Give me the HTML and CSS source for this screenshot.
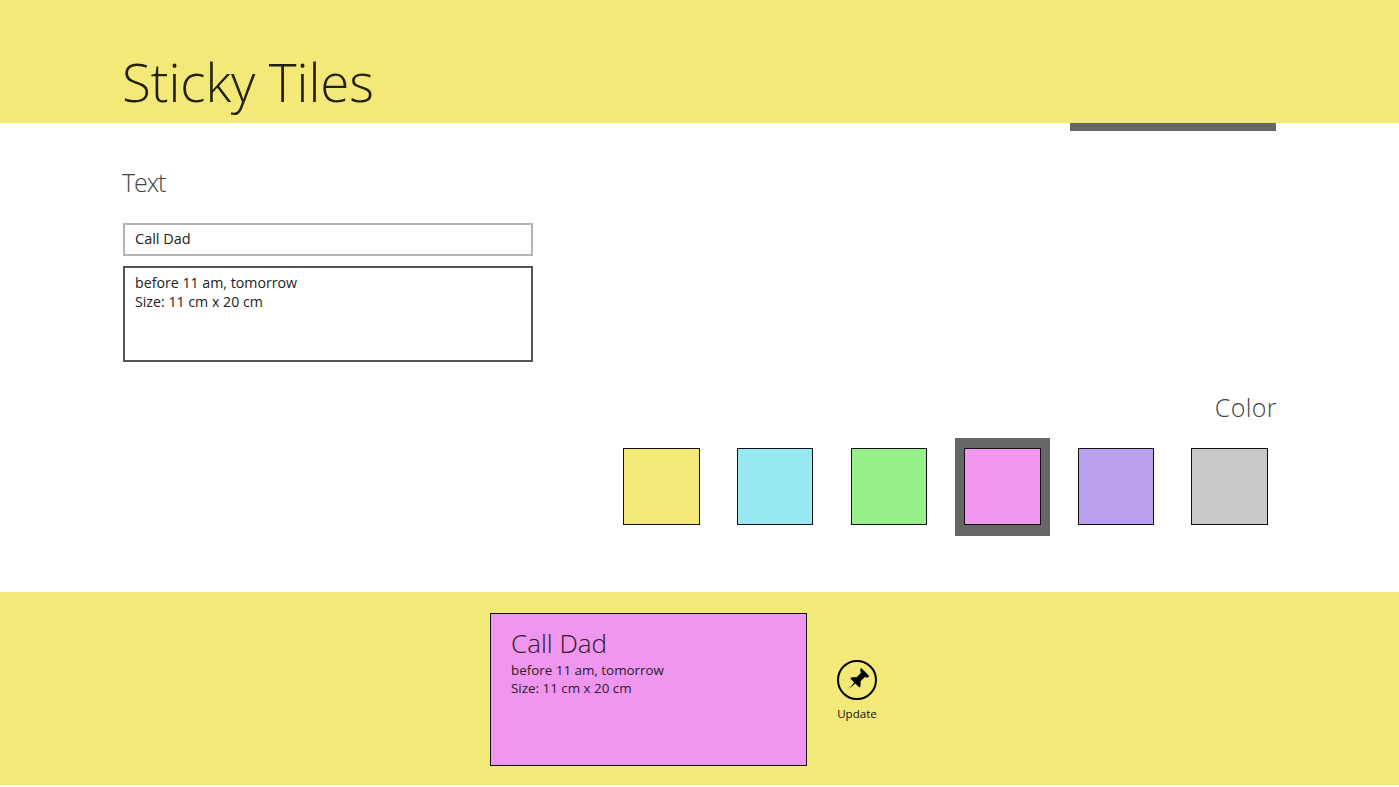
FILE: index.html
```html
<!DOCTYPE html>
<html lang="en">
<head>
    <meta charset="UTF-8">
    <meta name="viewport" content="width=device-width, initial-scale=1.0">
    <title>Sticky Tiles</title>
    <link rel="stylesheet" href="styles.css">
</head>
<body>
    <header class="app-header">
        <h1>Sticky Tiles</h1>
    </header>

    <main class="editor">
        <div class="tab-row">
            <div class="tab-marker"></div>
        </div>

        <section class="text-section">
            <h2>Text</h2>
            <input class="title-input" type="text" value="Call Dad">
            <textarea class="body-input">before 11 am, tomorrow
Size: 11 cm x 20 cm</textarea>
        </section>

        <section class="color-section">
            <h2>Color</h2>
            <div class="swatches">
                <div class="swatch-slot"><div class="swatch yellow"></div></div>
                <div class="swatch-slot"><div class="swatch cyan"></div></div>
                <div class="swatch-slot"><div class="swatch green"></div></div>
                <div class="swatch-slot selected"><div class="swatch pink"></div></div>
                <div class="swatch-slot"><div class="swatch purple"></div></div>
                <div class="swatch-slot"><div class="swatch gray"></div></div>
            </div>
        </section>
    </main>

    <footer class="preview-bar">
        <div class="tile">
            <div class="tile-title">Call Dad</div>
            <p>before 11 am, tomorrow</p>
            <p>Size: 11 cm x 20 cm</p>
        </div>
        <button class="update-button">
            <svg width="40" height="40" viewBox="0 0 40 40">
                <circle cx="20" cy="20" r="19" fill="none" stroke="#000" stroke-width="2"/>
                <g transform="rotate(45 20 20)">
                    <path d="M14.2 8.5h11.6v2.4l-2.4 1.4v6l3.6 3.6v1.8h-5.6l-.8 8.5-.8-8.5h-5.6v-1.8l3.6-3.6v-6l-2.4-1.4z" fill="#000"/>
                </g>
            </svg>
            <span>Update</span>
        </button>
    </footer>
</body>
</html>
```

FILE: styles.css
```css
body {
    font-family: "Open Sans", Arial, sans-serif;
    margin: 0;
    height: 787px;
    overflow: hidden;
    background-color: #fff;
    color: #222;
}

.app-header {
    height: 123px;
    background-color: #f3e978;
    padding-left: 122px;
}

.app-header h1 {
    margin: 0;
    padding-top: 47px;
    font-size: 53px;
    line-height: 70px;
    font-weight: 300;
    letter-spacing: -0.1px;
    color: #23200d;
}

.editor {
    height: 469px;
    padding: 0 122px 0 123px;
}

.tab-row {
    display: flex;
    justify-content: flex-end;
}

.tab-marker {
    width: 206px;
    height: 8px;
    margin-right: 1px;
    background-color: #666;
}

.text-section {
    width: 410px;
    padding-top: 35px;
}

h2 {
    margin: 0;
    font-size: 25px;
    line-height: 32px;
    font-weight: 300;
    color: #444;
}

.text-section h2 {
    margin-left: -1px;
    letter-spacing: -1.1px;
}

.title-input,
.body-input {
    display: block;
    box-sizing: border-box;
    width: 100%;
    padding: 0 10px;
    border-radius: 0;
    outline: none;
    background: #fff;
    font-family: "Open Sans", Arial, sans-serif;
    color: #222;
}

.title-input {
    height: 33px;
    margin-top: 25px;
    padding-bottom: 2px;
    border: 2px solid #b4b4b4;
    font-size: 14.5px;
}

.body-input {
    height: 96px;
    margin-top: 10px;
    padding-top: 5px;
    border: 2px solid #555;
    font-size: 14.2px;
    line-height: 19px;
    resize: none;
}

.color-section {
    margin-top: 29px;
}

.color-section h2 {
    text-align: right;
    letter-spacing: 0.4px;
}

.swatches {
    display: flex;
    justify-content: flex-end;
    align-items: center;
    gap: 19.1px;
    margin-top: 15px;
}

.swatch-slot {
    box-sizing: border-box;
    width: 94.5px;
    height: 98px;
    padding: 10px 8.8px;
}

.swatch-slot.selected {
    background-color: #666;
}

.swatch {
    box-sizing: border-box;
    width: 76.5px;
    height: 77px;
    border: 1px solid #111;
}

.yellow { background-color: #f3e978; }
.cyan { background-color: #96e9f1; }
.green { background-color: #96f08a; }
.pink { background-color: #f096ee; }
.purple { background-color: #b9a1ee; }
.gray { background-color: #c8c8c8; }

.preview-bar {
    display: flex;
    align-items: flex-start;
    height: 193px;
    padding-left: 490px;
    background-color: #f3e978;
}

.tile {
    box-sizing: border-box;
    width: 317px;
    height: 153px;
    margin-top: 21px;
    padding: 12px 20px;
    border: 1px solid #111;
    background-color: #f096ee;
    color: #2a1a2a;
}

.tile-title {
    font-size: 26px;
    line-height: 35px;
    font-weight: 300;
}

.tile p {
    margin: 0;
    font-size: 13.4px;
    line-height: 18px;
}

.update-button {
    display: flex;
    flex-direction: column;
    align-items: center;
    width: 60px;
    margin: 68px 0 0 20px;
    padding: 0;
    border: none;
    background: none;
    font-family: "Open Sans", Arial, sans-serif;
    font-size: 11.6px;
    color: #111;
    cursor: pointer;
}

.update-button span {
    margin-top: 6px;
}
```
